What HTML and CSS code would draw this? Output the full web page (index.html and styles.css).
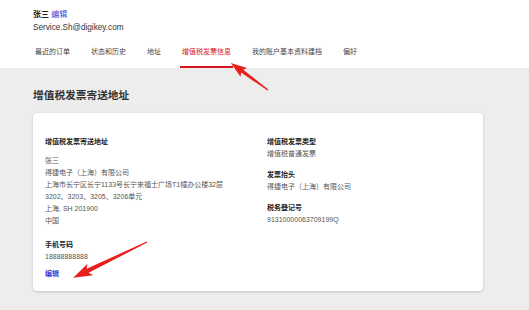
FILE: index.html
```html
<!DOCTYPE html>
<html lang="zh-CN">
<head>
    <meta charset="UTF-8">
    <meta name="viewport" content="width=device-width, initial-scale=1.0">
    <title>增值税发票信息</title>
    <link rel="stylesheet" href="styles.css">
</head>
<body>

    <div class="account-header">
        <div class="user-name">张三 <a class="edit-link" href="#">编辑</a></div>
        <div class="user-email">Service.Sh@digikey.com</div>
        <ul class="tabs">
            <li>最近的订单</li>
            <li>状态和历史</li>
            <li>地址</li>
            <li class="active">增值税发票信息</li>
            <li>我的账户基本资料建档</li>
            <li>偏好</li>
        </ul>
    </div>

    <div class="content">
        <h2>增值税发票寄送地址</h2>

        <div class="card">
            <div class="col">
                <div class="label">增值税发票寄送地址</div>
                <div class="address">
                    <div>张三</div>
                    <div>得捷电子（上海）有限公司</div>
                    <div>上海市长宁区长宁1133号长宁来福士广场T1幢办公楼32层</div>
                    <div>3202、3203、3205、3206单元</div>
                    <div>上海, SH 201900</div>
                    <div>中国</div>
                </div>
                <div class="label phone-label">手机号码</div>
                <div class="value">18888888888</div>
                <a class="card-edit" href="#">编辑</a>
            </div>
            <div class="col">
                <div class="label">增值税发票类型</div>
                <div class="value">增值税普通发票</div>
                <div class="label next">发票抬头</div>
                <div class="value">得捷电子（上海）有限公司</div>
                <div class="label next">税务登记号</div>
                <div class="value">91310000063709199Q</div>
            </div>
        </div>
    </div>

    <!-- red annotation arrows drawn over the screenshot -->
    <svg class="marks" width="529" height="310" viewBox="0 0 529 310">
        <g transform="translate(268 90) rotate(216.1)">
            <polygon points="0,-0.6 32,-1.8 30,-5.5 46,0 30,5.5 32,1.8 0,0.6" fill="#e8201c"/>
        </g>
        <g transform="translate(147 242) rotate(154.1)">
            <polygon points="0,-0.6 66,-2.2 63,-6.5 82,0 63,6.5 66,2.2 0,0.6" fill="#e8201c"/>
        </g>
    </svg>

</body>
</html>
```

FILE: styles.css
```css
body {
    margin: 0;
    font-family: "Liberation Sans", "Noto Sans CJK SC", sans-serif;
    background: #ededed;
    color: #333;
    height: 310px;
    position: relative;
    overflow: hidden;
}
a {
    text-decoration: none;
}
.account-header {
    background: white;
    padding: 9px 0 0 33px;
}
.user-name {
    font-size: 8px;
    line-height: 12px;
    font-weight: bold;
    color: #222;
}
.edit-link {
    color: #3d3ad0;
    font-weight: normal;
}
.user-email {
    font-size: 8.2px;
    line-height: 12px;
    margin-top: 1px;
    color: #333;
}
.tabs {
    list-style: none;
    margin: 12px 0 0 0;
    padding: 0;
    display: flex;
    gap: 17px;
}
.tabs li {
    font-size: 7px;
    line-height: 12px;
    color: #444;
    padding: 0 2px 8px 2px;
    border-bottom: 2px solid transparent;
}
.tabs li.active {
    color: #d8141c;
    border-bottom-color: #d8141c;
}
.content {
    padding: 20px 46px 0 33px;
}
h2 {
    margin: 0;
    font-size: 10.7px;
    line-height: 14px;
    color: #333;
}
.card {
    margin-top: 11px;
    background: white;
    border-radius: 4px;
    box-shadow: 0 1px 3px rgba(0, 0, 0, 0.18);
    padding: 23px 12px 10px 12px;
    display: grid;
    grid-template-columns: 222px 1fr;
    height: 145px;
}
.label {
    font-size: 7px;
    line-height: 12px;
    font-weight: bold;
    color: #222;
}
.value, .address div {
    font-size: 7px;
    line-height: 12px;
    color: #555;
}
.address {
    margin-top: 7px;
}
.phone-label {
    margin-top: 12px;
}
.label.next {
    margin-top: 9px;
}
.card-edit {
    display: block;
    margin-top: 5px;
    font-size: 7px;
    line-height: 12px;
    font-weight: bold;
    color: #3d3ad0;
}
.marks {
    position: absolute;
    left: 0;
    top: 0;
    pointer-events: none;
}
```
